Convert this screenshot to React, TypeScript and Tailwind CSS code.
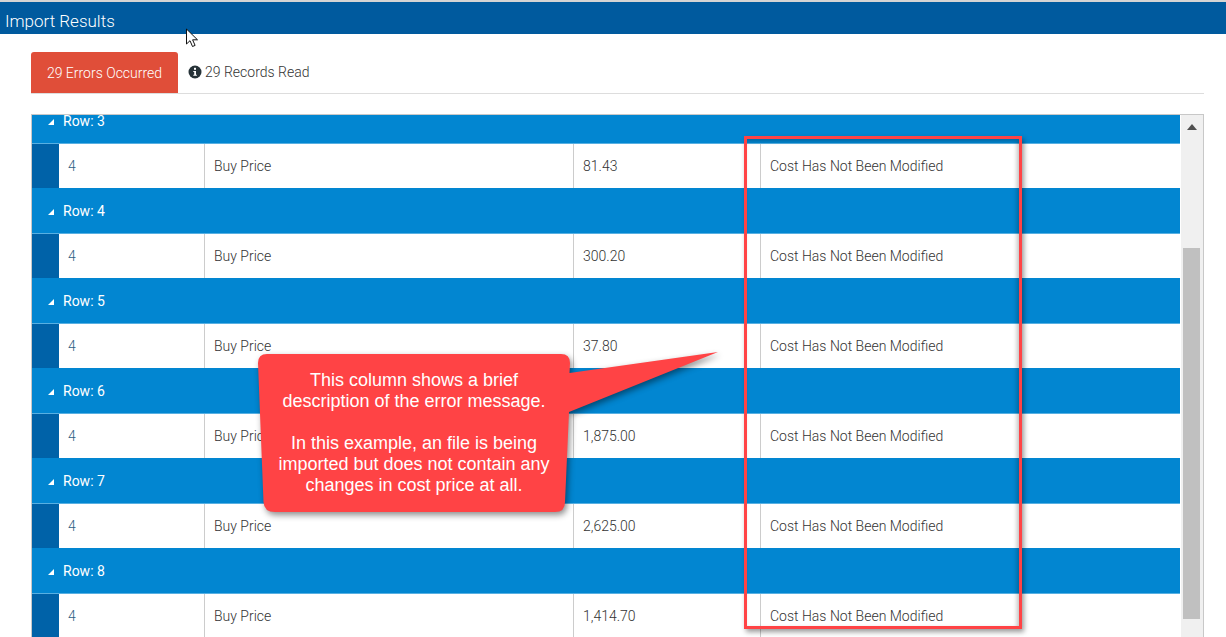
import { Fragment } from "react";

const rows = [
  { row: 3, value: "81.43" },
  { row: 4, value: "300.20" },
  { row: 5, value: "37.80" },
  { row: 6, value: "1,875.00" },
  { row: 7, value: "2,625.00" },
  { row: 8, value: "1,414.70" },
];

function Callout() {
  return (
    <div className="absolute left-[250px] top-[345px] w-[480px] h-[180px]">
      <svg width="480" height="180" viewBox="0 0 480 180" className="absolute inset-0 drop-shadow-[2px_3px_3px_rgba(0,0,0,0.45)]">
        <path
          d="M17 9 H311 Q320 9 320 18 L319.500 28 L468 7 L319 67 L315 157 Q315 167 305 167 H25 Q14 167 13.500 157 L8 18 Q8 9 17 9 Z"
          fill="#ff4345"
        />
      </svg>
      <div className="absolute left-[8px] top-[25px] w-[312px] text-center text-white text-[18px] leading-[21px] font-['Liberation_Sans',sans-serif]">
        <div>This column shows a brief</div>
        <div>description of the error message.</div>
        <div className="h-[21px]" />
        <div>In this example, an file is being</div>
        <div>imported but does not contain any</div>
        <div>changes in cost price at all.</div>
      </div>
    </div>
  );
}

export default function App() {
  return (
    <div className="relative w-[1226px] h-[637px] overflow-hidden bg-white font-['Roboto',sans-serif] text-[14px] font-light text-[#333]">
      <div className="h-[2px] bg-[#d4d4d4]" />
      <div className="h-[32px] bg-[#005a9e] pl-[5px] text-[17px] leading-[39px] text-white">Import Results</div>

      <div className="ml-[31px] mt-[18px] w-[1173px]">
        <div className="flex h-[42px] items-stretch border-b border-[#ddd]">
          <div className="flex w-[147px] items-center justify-center rounded-t-[3px] bg-[#e04e39] pt-[1px] text-[14px] text-white">
            29 Errors Occurred
          </div>
          <div className="ml-[10px] flex items-center gap-[3px] pb-[1px] text-[14px]">
            <svg width="14" height="14" viewBox="0 0 14 14">
              <circle cx="7" cy="7" r="6.500" fill="#263238" />
              <rect x="6" y="2.800" width="2" height="2" fill="#fff" />
              <path d="M5.300 6h2.700v3.700h.9v1H5.300v-1h.9V7h-.9z" fill="#fff" />
            </svg>
            29 Records Read
          </div>
        </div>

        <div className="mt-[20px] flex h-[524px] border border-[#c8c8c8] border-b-0">
          <div className="w-[1149px] overflow-hidden">
            <div className="-mt-[17px]">
              {rows.map((r) => (
                <Fragment key={r.row}>
                  <div className="flex h-[46px] items-center bg-[#0286d1] border-b border-[#58b0e2] pt-[2px] text-white">
                    <svg width="8" height="8" viewBox="0 0 8 8" className="ml-[15px]">
                      <path d="M7 1v6H1z" fill="#fff" />
                    </svg>
                    <span className="ml-[8px] text-[14px] font-normal">Row: {r.row}</span>
                  </div>
                  <div className="flex h-[44px] bg-[#0062a8]">
                    <div className="ml-[27px] flex flex-1 items-center bg-white">
                      <div className="flex h-full w-[146px] items-center border-r border-[#ccc] pl-[9px] text-[#2f5f85]">4</div>
                      <div className="flex h-full w-[369px] items-center border-r border-[#ccc] pl-[9px]">Buy Price</div>
                      <div className="flex h-full w-[187px] items-center border-r border-[#ccc] pl-[9px]">{r.value}</div>
                      <div className="flex h-full flex-1 items-center pl-[9px]">Cost Has Not Been Modified</div>
                    </div>
                  </div>
                </Fragment>
              ))}
            </div>
          </div>
          <div className="relative w-[23px] border-l border-white bg-[#f0f0f0]">
            <svg width="10" height="6" viewBox="0 0 10 6" className="absolute left-[6px] top-[9px]">
              <path d="M5 0l5 6H0z" fill="#505050" />
            </svg>
            <div className="absolute left-[2px] top-[133px] h-[371px] w-[17px] bg-[#c0c0c0]" />
          </div>
        </div>
      </div>

      <div className="absolute left-[744px] top-[136px] h-[493px] w-[278px] border-[3px] border-[#ff4345] shadow-[2px_3px_5px_rgba(0,0,0,0.4),inset_-2px_2px_4px_rgba(0,0,0,0.25)]" />

      <Callout />

      <svg width="14" height="20" viewBox="0 0 14 20" className="absolute left-[186px] top-[28px]">
        <path d="M.500 1v15l3.500-3.300 2.500 5.800 2.600-1.100-2.500-5.600h4.900z" fill="#fff" stroke="#111" strokeWidth="1" />
      </svg>
    </div>
  );
}
